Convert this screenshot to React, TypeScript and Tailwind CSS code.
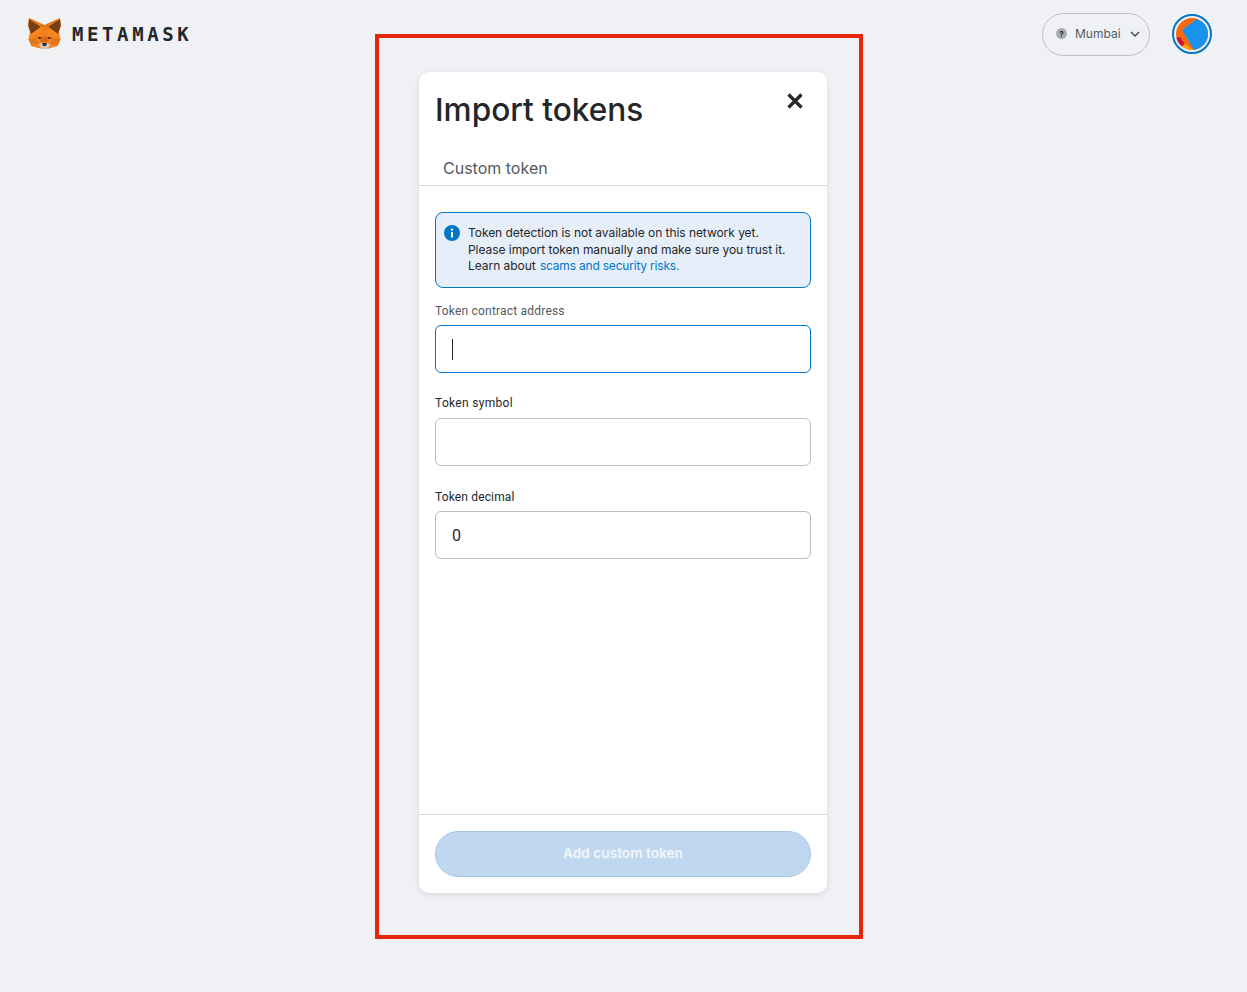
import React from "react";

const euclid = "font-['Inter',sans-serif]";

function Fox() {
  return (
    <svg width="33" height="31" viewBox="0 0 33 31" className="shrink-0">
      <polygon points="1,0 16.5,8 32,0 33,8 31,14 32.5,21 29.5,28 22,30 20,31 13,31 11,30 3.5,28 0.5,21 2,14 0,8" fill="#f6851b" />
      <polygon points="1,1 13,9 3,16 0.5,8" fill="#763d16" />
      <polygon points="32,1 20,9 30,16 32.5,8" fill="#763d16" />
      <polygon points="1,1 3,16 0.5,8" fill="#8f4a1a" />
      <polygon points="32,1 30,16 32.5,8" fill="#8f4a1a" />
      <polygon points="1,0 16.5,7 32,0 20,9 13,9" fill="#e4761b" />
      <polygon points="13,9 20,9 19,19 14,19" fill="#ee7e1e" />
      <polygon points="3,16 13,9 14,19 9,20" fill="#f6851b" />
      <polygon points="30,16 20,9 19,19 24,20" fill="#f6851b" />
      <polygon points="9,19 14,19 12,21.5" fill="#5a2d0e" />
      <polygon points="24,19 19,19 21,21.5" fill="#5a2d0e" />
      <polygon points="0.5,21 3.5,28 11,26 9,20" fill="#e2761b" />
      <polygon points="32.5,21 29.5,28 22,26 24,20" fill="#e2761b" />
      <polygon points="3.5,28 11,30 13,28 11,26" fill="#f08a2a" />
      <polygon points="29.5,28 22,30 20,28 22,26" fill="#f08a2a" />
      <polygon points="14,19 19,19 21,24 12,24" fill="#d9691a" />
      <polygon points="11,26 13,25 20,25 22,26 20,31 13,31" fill="#d7c1b3" />
      <polygon points="14,25 19,25 18,28 15,28" fill="#233447" />
    </svg>
  );
}

function Field({ label, value, focused, labelClass, gapClass }: { label: string; value?: string; focused?: boolean; labelClass: string; gapClass: string }) {
  return (
    <div className="flex flex-col">
      <div className={`font-['Roboto',sans-serif] text-[12px] leading-[16px] ${labelClass} ${gapClass}`}>{label}</div>
      <div
        className={`flex h-[48px] items-center rounded-[6px] border bg-white px-[16px] font-['Roboto',sans-serif] text-[16px] text-[#24272a] ${
          focused ? "border-[#0376c9]" : "border-[#bbc0c5]"
        }`}
      >
        {focused ? <span className="h-[21px] w-px bg-[#24272a]" /> : <span className="mt-[1px]">{value}</span>}
      </div>
    </div>
  );
}

export default function App() {
  return (
    <div className="relative min-h-[992px] bg-[#f0f1f5]">
      <header className="flex h-[72px] items-start justify-between pl-[28px] pr-[35px] pt-[13px]">
        <div className="flex items-center gap-[11px] pt-[5px]">
          <Fox />
          <span className="font-['DejaVu_Sans_Mono',monospace] text-[19px] font-bold leading-[18px] tracking-[3.6px] text-[#24272a]">METAMASK</span>
        </div>
        <div className="flex items-start gap-[22px]">
          <div className={`flex h-[43px] w-[108px] items-center rounded-full border border-[#bbc0c5] pb-[2px] pl-[13px] ${euclid} text-[12px] text-[#535a61]`}>
            <span className="flex h-[11px] w-[11px] items-center justify-center rounded-full bg-[#a9adb1] text-[8px] font-bold leading-none text-[#24272a]">?</span>
            <span className="ml-[8px]">Mumbai</span>
            <svg width="10" height="6" viewBox="0 0 10 6" className="ml-[9px]" fill="none" stroke="#3c4146" strokeWidth="1.3">
              <path d="M1 1l4 4 4-4" />
            </svg>
          </div>
          <div className="mt-[1px] flex h-[40px] w-[40px] items-center justify-center rounded-full border-2 border-[#0376c9]">
            <svg width="32" height="32" viewBox="0 0 32 32">
              <defs>
                <clipPath id="av"><circle cx="16" cy="16" r="16" /></clipPath>
              </defs>
              <g clipPath="url(#av)">
                <rect width="32" height="32" fill="#f9690e" />
                <polygon points="-1,20 4,19 8.3,25.3 5.7,30 -1,30" fill="#c8143c" />
                <polygon points="5,29 9,26 12,28 14,30 18,32 16,34 6,34" fill="#f5a90c" />
                <polygon points="6,12 21,1 36,8 36,36 18,32" fill="#1992ee" />
              </g>
            </svg>
          </div>
        </div>
      </header>

      <main className="flex justify-center pr-px">
        <section className="flex h-[821px] w-[408px] flex-col overflow-hidden rounded-[10px] bg-white shadow-[0_2px_6px_rgba(0,0,0,0.1)]">
          <div className="flex items-start justify-between pl-[16px] pr-[23px] pt-[16px]">
            <h1 className={`${euclid} text-[31.6px] font-medium leading-[44px] text-[#24272a]`}>Import tokens</h1>
            <svg width="18" height="18" viewBox="0 0 18 18" className="mt-[4px]" fill="none" stroke="#24272a" strokeWidth="3.2">
              <path d="M2.5 2.5l13 13M15.5 2.5l-13 13" />
            </svg>
          </div>
          <div className={`mt-[25px] border-b border-[#d6d9dc] pb-[6px] pl-[24px] ${euclid} text-[16px] leading-[22px] text-[#535a61]`}>Custom token</div>

          <div className="flex flex-1 flex-col px-[16px] pt-[26px]">
            <div className={`flex h-[76px] items-start gap-[8px] rounded-[8px] border border-[#0376c9] bg-[#e6eff9] pl-[8px] pt-[12px] ${euclid} text-[12px] leading-[16.5px] tracking-[-0.05px] text-[#24272a]`}>
              <svg width="16" height="16" viewBox="0 0 16 16" className="shrink-0">
                <circle cx="8" cy="8" r="8" fill="#0376c9" />
                <rect x="7" y="7" width="2" height="5.5" rx="0.5" fill="#fff" />
                <circle cx="8" cy="4.6" r="1.2" fill="#fff" />
              </svg>
              <p>
                Token detection is not available on this network yet.
                <br />
                Please import token manually and make sure you trust it.
                <br />
                Learn about <span className="ml-px tracking-[-0.2px] text-[#0376c9]">scams and security risks.</span>
              </p>
            </div>
            <div className="mt-[15px] flex flex-col">
              <Field label="Token contract address" focused labelClass="text-[#535a61] tracking-[0.2px]" gapClass="mb-[6px]" />
              <div className="mt-[22px]">
                <Field label="Token symbol" labelClass="text-[#24272a] tracking-[0.3px]" gapClass="mb-[7px]" />
              </div>
              <div className="mt-[23px]">
                <Field label="Token decimal" value="0" labelClass="text-[#24272a] tracking-[0.15px]" gapClass="mb-[6px]" />
              </div>
            </div>
          </div>

          <div className="border-t border-[#d6d9dc] px-[16px] pb-[16px] pt-[16px]">
            <div className={`flex h-[46px] items-center justify-center rounded-full border border-[#a5c8e9] bg-[#c0d8ef] pb-[2px] ${euclid} text-[13.7px] font-semibold text-[#f1f6fb]`}>Add custom token</div>
          </div>
        </section>
      </main>

      <div className="pointer-events-none absolute left-[375px] top-[34px] h-[905px] w-[488px] border-[4px] border-[#e5260a]" />
    </div>
  );
}
